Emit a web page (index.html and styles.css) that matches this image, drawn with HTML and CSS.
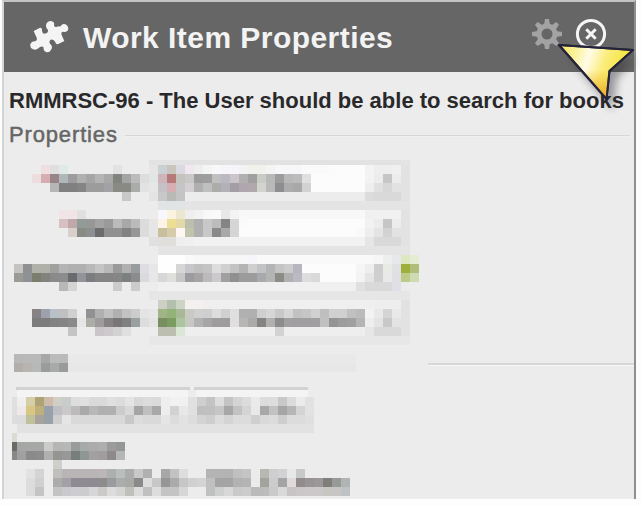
FILE: index.html
```html
<!DOCTYPE html>
<html lang="en">
<head>
<meta charset="utf-8">
<title>Work Item Properties</title>
<link rel="stylesheet" href="styles.css">
</head>
<body>
<main class="panel">
  <header class="bar">
    <svg class="puzzle" viewBox="18 18 117 99" aria-hidden="true">
      <path d="M29 48L48 38Q54 37 54 44Q54 56 62 56Q73 55 72 45Q65 38 66 30Q69 18 81 18Q93 20 90 31Q91 38 99 35L104 34Q109 36 112 31Q118 24 127 29Q135 36 132 46Q126 54 117 50Q110 51 113 60L121 78L103 87Q96 90 94 82Q89 71 80 74Q74 78 78 86Q86 92 83 101Q77 114 66 111Q57 107 59 98Q56 92 48 96L44 99Q37 106 27 103Q17 98 19 88Q23 78 34 79Q41 76 38 68Z"/>
    </svg>
    <h1>Work Item Properties</h1>
    <svg class="gear" viewBox="0 0 32 32" aria-hidden="true">
      <g class="teeth">
        <path id="tooth" d="M13 7L14 1H18L19 7Z"/>
        <use href="#tooth" transform="rotate(45 16 16)"/>
        <use href="#tooth" transform="rotate(90 16 16)"/>
        <use href="#tooth" transform="rotate(135 16 16)"/>
        <use href="#tooth" transform="rotate(180 16 16)"/>
        <use href="#tooth" transform="rotate(225 16 16)"/>
        <use href="#tooth" transform="rotate(270 16 16)"/>
        <use href="#tooth" transform="rotate(315 16 16)"/>
      </g>
      <circle cx="16" cy="16" r="8" class="ring"/>
    </svg>
    <svg class="close" viewBox="0 0 32 32" aria-hidden="true">
      <circle cx="16" cy="16" r="13.6"/>
      <path d="M11.3 11.3L20.7 20.7M20.7 11.3L11.3 20.7"/>
    </svg>
  </header>
  <h2 class="item">RMMRSC-96 - The User should be able to search for books</h2>
  <div class="legend"><span>Properties</span><i></i></div>
  <div class="fields"><svg id="fields" class="mosaic" width="424" height="212"></svg><i></i></div>
  <svg id="links" class="mosaic links" width="408" height="109"></svg>
</main>
<svg class="pointer" viewBox="0 0 86 72" aria-hidden="true">
  <defs>
    <linearGradient id="gold" x1="0" y1="0" x2="1" y2=".25">
      <stop offset="0" stop-color="#f5e65c"/><stop offset=".22" stop-color="#fbf094"/>
      <stop offset=".43" stop-color="#fffce6"/><stop offset=".65" stop-color="#fbed7c"/>
      <stop offset="1" stop-color="#f3e22c"/>
    </linearGradient>
    <linearGradient id="amber" x1="0" y1="0" x2="0" y2="1">
      <stop offset=".45" stop-color="#f0b830" stop-opacity="0"/><stop offset="1" stop-color="#eda524"/>
    </linearGradient>
  </defs>
  <path class="shade" d="M15 16L79 18L62 36L58 68Z"/>
  <path class="arrow" d="M4 3L78 8L54.5 29L51.5 57Z" fill="url(#gold)"/>
  <path class="arrow" d="M4 3L78 8L54.5 29L51.5 57Z" fill="url(#amber)"/>
</svg>
<script src="mosaic.js"></script>
</body>
</html>
```

FILE: styles.css
```css
* { box-sizing: border-box; }

body {
  margin: 0;
  width: 641px;
  height: 506px;
  overflow: hidden;
  background: #fdfdfd;
  font-family: "Liberation Sans", Arial, sans-serif;
}

.panel {
  width: 634px;
  height: 499px;
  margin-left: 2px;
  border-top: 2px solid #c4c4c4;
  border-left: 2px solid #d2d4d5;
  border-right: 2px solid #8e8e8e;
  background: #ececec;
  overflow: hidden;
}

.bar {
  display: flex;
  align-items: center;
  height: 70px;
  padding: 0 27px 0 26px;
  background: #666;
}

.puzzle { width: 39px; height: 33px; fill: #f4f4f4; }

h1 {
  flex: 1;
  margin: 2px 0 0 14px;
  color: #f3f3f3;
  font-size: 30px;
  line-height: 34px;
  letter-spacing: .45px;
  white-space: nowrap;
}

.gear { width: 32px; height: 32px; margin: -6px 12px 0 0; }
.teeth { fill: #a3a3a3; }
.ring { fill: none; stroke: #a3a3a3; stroke-width: 5; }

.close {
  width: 32px;
  height: 32px;
  margin-top: -6px;
  fill: none;
  stroke: #f5f5f5;
  stroke-width: 3;
}

.item {
  margin: 16px 0 0 5px;
  color: #29292b;
  font-size: 22px;
  line-height: 26px;
  letter-spacing: 0;
  white-space: nowrap;
}

.legend {
  display: flex;
  align-items: center;
  height: 24px;
  margin: 9px 4px 0 5px;
  color: #666;
  font-size: 22px;
  letter-spacing: .85px;
  -webkit-text-stroke: .5px #666;
}

.legend i {
  flex: 1;
  height: 2px;
  margin: 2px 0 0 7px;
  background: #d7d7d7;
  border-bottom: 1px solid #f1f1f1;
}

.fields { display: flex; align-items: flex-end; margin-top: 13px; }

.fields i {
  flex: 1;
  height: 3px;
  margin-bottom: 6px;
  background: #d8d8d8;
  border-bottom: 1px solid #f8f8f8;
}

.mosaic { display: block; shape-rendering: crispEdges; }
.links { margin: 15px 0 0 8px; }

.pointer {
  position: absolute;
  left: 555px;
  top: 42px;
  width: 86px;
  height: 72px;
}

.arrow { stroke: #24233a; stroke-width: 2; stroke-linejoin: round; }
.shade { fill: #303038; opacity: .45; filter: blur(4px); }
```

FILE: mosaic.js
```javascript
// Each row: [y, first column, cells]. A cell is a grey byte or an rgb triple;
// "*n" repeats it and ".." leaves the panel colour showing.
const CELL = 9;

const fieldRows = [
  [160, 16, "e2*28 e4"],
  [165, 4, "f0dfe0 df dfe9e8 ..*5 e2 ..*3 e5 c9d1d4 c8c5bd dad8e0 f0e7f0 ee f4 f8 f6f6fa*2 f3 f1f2ec*2 f4 f7f7fa*3 fa*3 fc*4 f3 ee ee f0 e2"],
  [174, 3, "eedddf d6aeb2 998488 b0b7b8 9c b0 a5 b4 a8 80837e a4 bb dd e1e5e4 cdb5b9 b67a78 c4c4bc c8 9c 9e c0 bab8c0 cbc5ca b0 a0 c9cbc5 b8 9c b8 bc e0 fc*6 f3 ec c6 ec e2"],
  [183, 5, "b6 80 80 85 9c 9c a2a2a6 8a8a84*2 aaacac e2 e6 c4c2c6 d5afb4 c5c5c7 d6cfd2 b0 bf aaadaa b4b0b7 a39da5 aea7af b0a8aa d4d4cf b9 8d8d90 ac a8 d2 fc*6 ee e0 d7 e2 e2"],
  [192, 13, "c8 ..*2 e4 c8 b9b9b5 c4 ec*20 dc d9*3 e2"],
  [201, 17, "e1e4e5*3 e4*25"],
  [210, 6, "f0e4e7*2 e0 ..*8 f7f7fd fbf3df ebe6d0 ee f2 f8 fa e8 f3 f8*14 f0 f1*3 e2"],
  [219, 6, "d6c0c2 c0a8aa 929c96 97 a3 9a bb a8 bb dc e6 fdf3e6 ebdf96 e3d9a8 bcbfb0 b0 c8 bc 84 d6 fa fc*13 f2 ec c6 ec e2"],
  [228, 7, "dad0ca 8a8b85 8c9090 6c 90 90 82 97 dc e6 c8bf9c d6ccac fdf6f2 c0c4ac b0 c8 8a a9 d5 fc*13 f9 ee e4 d3 e2 e2"],
  [237, 16, "e0 e0dfdc*2 ee f0 f2*19 e6 d9*3 e2"],
  [246, 17, "e4*28"],
  [255, 17, "fe*3 f9 f7*6 f5f5fb f9*13 f6 ee e6e8eb dde8c0 e4ecd4"],
  [264, 1, "c7c3c0 8e9091 b0b2aa*2 a0 b4 b0 b0 b8 c4 b8 9a b0 989c9e dddde2 e7e6e9 fe*2 d6 c8c6ca c0 c4 dd d0 c4 b4 cf c1c3c4 b4 c4 cc b7b5bd fc*6 f5 ee ce e9eae4 dfe1e5 9eb03a afbf7b"],
  [273, 1, "9c9a94 8e9295 7b7e6c 82837c 8a 8c 6a6b6f 93949a 7c7d81 84*2 86 7d8080 8c dadade e7e6e9 d7 dfdfdc c7 9c9ca0 a7a4a6 bb cccacd a0 90 9c 9c a8a9ad b4 8c8c86 b0 bbbac2 de d9 fc*4 f3 e5 cf e9 dfdfe5 bccb8a cddab2"],
  [282, 6, "b8 d4 ..*4 cc .. cc ..*2 f0*22 e0 d9*3 dfdfe6"],
  [291, 16, "e6*29"],
  [300, 17, "cccfc4 b4bfae ced4c4 f3f0ef*2 ef*19 ee*3 e2"],
  [309, 3, "868286 9ea0ac b8c0c8 c0 d0 .. 909190 b0 c0 b0 c2 cc e4 e7 a0b487 93b378 a8b997 cacac4 d0 cf dd d0 df b0 b0 cf d6 c8 d6 c2 c6 d0 bf d0 d0 c0 bb f3 e9 d4 e9 e2"],
  [318, 3, "7c 7c 82 85 8a e6 acada6 9f9b9c 858284 7a7678 80 9aa0a0 dbdedc e4 788e60 7a9c60 adc4a0 c8c8c2 b2 a6 9e9c9d*2 e0dedf b8b6b4 acaaa9 858483 b0 8c a0 a09ea0*2 a0 c0 94 9c a0 b4 ee e4 c8 e3 e2"],
  [327, 7, "c4 ..*2 c9c5c8 cccacc d2 df ..*3 bcbfb0*2 dae6d6 ee*10 d2 ee*9 e6 d9*3 e2"],
  [336, 16, "e7*29"],
  [354, 1, "b8 b9 b9 a5a8a6 bb b9bbba e9*32"],
  [363, 1, "b4aeaa b8b4b0 b6b9b8 999c9b a8aaa9 999b9a e7*32"]
];

const linkRows = [
  [397, -1, "df ef d4cfa6 afa274 cebbaa cfcfc6 c8cccc dd e0 da da e0 dc e4 d8 dc da ee f1 f0 e0 cf c4 dd c4 d4 dc ea dc dd c8 dc eb e2"],
  [406, -1, "df eee8e8 d8c684 bfaf7a 98a0ac bec0c5 cbc9ca bb a9 b8 b0 b0 cc d8 a5 bf a8 ee d2 e8 e0 bf c0 c6 a7 c2 d4 e9 a8 c2 a6 b6 d4 e2"],
  [415, -1, "dd dc c0c09c a5a39b 98a0a8 ce e5 d9*6 c8 dc d9 d9 e5 dc e2 dd d4 ce dc d4 dc dc cf d9 dc ce dc dc df"],
  [424, 0, "e2*33"],
  [433, -1, "dadcd4"],
  [442, -1, "686a65 a4a7a5 a6a8a6*2 cb b8b6b4 b6b8b5 989d9b a6aaa9 acabac ae 9b 949796"],
  [451, -1, "888986 a0 8a8a8c 8c b0 929590 98 787e7b 8f9795 a2a0a1 a09da0 8e8a8c b4b7b5"],
  [460, 4, "cecfca"],
  [469, 1, "e2 d4 .. c0bfbc b9b5b7*4 bcb6b9 acb0af bbbfbb ac c8 b0 .. a7 c2 dd ..*2 b4 b4 b3 c0 c4 .. b8b8b2 ce d1d2d4 e7e9e9 c8"],
  [478, 1, "dc d0 .. ac a2a1a7 8e8c92*3 8f8c8e 9a9b9f ac a8aaa8 8a dd c8 96 aa c6 d0 d4 c0 a4 a4 b2 b4 eb a2a39c cc a4 e0dadb 918c8d 989395 9c9798 807e7b 989a98 b1b4b5"],
  [487, 1, "dc c4 .. c4 cacacc ccccd1 cccbce d6 cccac8 dc d4 c0c0bb dc c0 dd c4 c4 d6 ..*2 c0 cecfcf d8 c9 cc ba bc ca d9 c8c3c5 c9c7c8 cbc8c9 ccc7c8 c7c6c1 c8c6c5 bec2c4"]
];

function rect(svg, x, y, w, h, fill) {
  const r = document.createElementNS("http://www.w3.org/2000/svg", "rect");
  r.setAttribute("x", x);
  r.setAttribute("y", y);
  r.setAttribute("width", w);
  r.setAttribute("height", h);
  r.setAttribute("fill", fill);
  svg.appendChild(r);
}

function draw(svg, rows, left, top) {
  for (const [y, first, cells] of rows) {
    let column = first;
    for (const token of cells.split(" ")) {
      const [code, times] = token.split("*");
      for (let i = 0; i < Number(times || 1); i++, column++) {
        if (code === "..") continue;
        const fill = "#" + (code.length === 2 ? code.repeat(3) : code);
        const clipped = column < 0 ? 4 : 0;
        rect(svg, left + column * CELL + clipped, y - top, CELL - clipped, y === 160 ? 5 : CELL, fill);
      }
    }
  }
}

draw(document.getElementById("fields"), fieldRows, 1, 160);

const links = document.getElementById("links");
rect(links, 4, 0, 174, 3, "#d2d2d2");
rect(links, 182, 0, 114, 3, "#d2d2d2");
rect(links, 5, 3, 171, 7, "#f4f4f4");
rect(links, 184, 3, 112, 7, "#f4f4f4");
draw(links, linkRows, 5, 387);
```
